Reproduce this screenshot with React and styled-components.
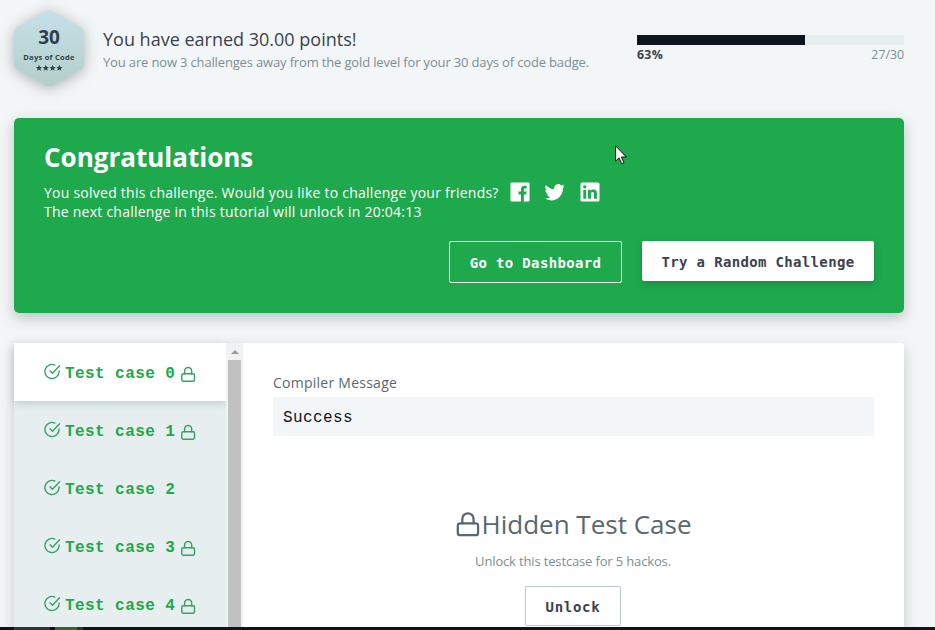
import React from "react";
import styled, { createGlobalStyle } from "styled-components";

const GlobalStyle = createGlobalStyle`
  * { box-sizing: border-box; }
  html, body { margin: 0; padding: 0; overflow: hidden; }
  body { background: #f3f6f7; font-family: "Open Sans", sans-serif; }
  p, h1, h2, h3 { margin: 0; font-weight: 400; }
`;

const mono = `"DejaVu Sans Mono", monospace`;
const wideMono = `"Liberation Mono", monospace`;

const Screen = styled.div`
  width: 935px;
  height: 630px;
  overflow: hidden;
  display: flex;
  flex-direction: column;
  background: #f3f6f7;
`;

const Content = styled.main`
  flex: 1;
  min-height: 0;
  overflow: hidden;
  padding: 0 31px 0 14px;
`;

const Header = styled.header`
  display: flex;
  height: 118px;
`;

const Badge = styled.svg`
  flex: none;
  width: 90px;
  height: 110px;
  margin-left: -10px;
  overflow: visible;

  path:first-of-type { filter: drop-shadow(0 2px 7px rgba(60, 65, 70, 0.38)); }
`;

const Points = styled.div`
  flex: 1;
  padding: 26px 0 0 9px;
  white-space: nowrap;
`;

const PointsTitle = styled.h2`
  font-size: 18px;
  line-height: 26px;
  color: #39424e;
`;

const PointsText = styled.p`
  font-size: 13px;
  line-height: 20px;
  letter-spacing: -0.155px;
  color: #7b8f93;
`;

const Progress = styled.div`
  width: 267px;
  padding-top: 35px;
`;

const Track = styled.div`
  height: 10px;
  background: #e7eeef;
`;

const Fill = styled.div`
  width: 168px;
  height: 100%;
  background: #0e141e;
`;

const ProgressLabels = styled.div`
  display: flex;
  justify-content: space-between;
  font-size: 12.3px;
  line-height: 20px;
  color: #7b8f93;

  strong { color: #39424e; letter-spacing: 0.3px; }
`;

const Banner = styled.section`
  height: 195px;
  padding: 22px 30px 0;
  border-radius: 5px;
  background: #1ea94c;
  color: #fff;
  box-shadow: 0 5px 14px rgba(50, 58, 68, 0.28);
`;

const BannerTitle = styled.h1`
  font-size: 26px;
  line-height: 34px;
  font-weight: 700;
`;

const BannerText = styled.p`
  display: flex;
  align-items: center;
  height: ${(p) => p.$height}px;
  font-size: 14px;
  letter-spacing: 0.245px;
  white-space: nowrap;
`;

const Share = styled.span`
  display: flex;
  gap: 15px;
  margin-left: 11.4px;

  svg { display: block; width: 20px; height: 20px; margin-top: -1px; fill: #fff; }
`;

const Actions = styled.div`
  display: flex;
  justify-content: flex-end;
  gap: 20px;
  margin-top: 29px;
`;

const Button = styled.button`
  height: ${(p) => p.$height || 40}px;
  width: ${(p) => p.$width}px;
  padding: 2px 0 0;
  border: ${(p) => p.$border || "0"};
  border-radius: 2px;
  background: ${(p) => p.$background || "transparent"};
  color: ${(p) => p.$color || "#39424e"};
  box-shadow: ${(p) => p.$shadow || "none"};
  font: 700 14px ${mono};
  letter-spacing: ${(p) => p.$spacing || 0.34}px;
  white-space: nowrap;
`;

const Results = styled.section`
  display: flex;
  height: 300px;
  margin-top: 30px;
  background: #fff;
  border-radius: 3px 3px 0 0;
  box-shadow: 0 5px 14px rgba(50, 68, 68, 0.24);
`;

const CaseList = styled.nav`
  width: 212px;
  background: #e7eeef;
`;

const CaseItem = styled.div`
  display: flex;
  align-items: center;
  height: 58px;
  padding-left: 30px;
  color: #1ba94c;
  background: ${(p) => (p.$active ? "#fff" : "transparent")};
  box-shadow: ${(p) => (p.$active ? "0 3px 8px rgba(60, 90, 90, 0.22)" : "none")};
  font: 700 16px ${wideMono};
  letter-spacing: 0.42px;
  white-space: pre;

  span { margin-top: 4px; }
  svg:first-child { margin: -1px 4px 0 0; }
  svg:last-child:not(:first-child) { margin: 4px 0 0 5px; }
`;

const Scrollbar = styled.div`
  width: 17px;
  padding: 0 2px;
  background: #f1f3f3;
`;

const ScrollArrow = styled.div`
  display: flex;
  justify-content: center;
  height: 17px;

  &::before {
    content: "";
    width: 0;
    height: 0;
    margin-top: 7px;
    border: 4px solid transparent;
    border-top: 0;
    border-bottom-color: #999;
    align-self: flex-start;
  }
`;

const ScrollThumb = styled.div`
  height: 283px;
  background: #c1c1c1;
`;

const Detail = styled.div`
  flex: 1;
  padding: 30px 30px 0;
`;

const Label = styled.p`
  font-size: 14px;
  line-height: 20px;
  letter-spacing: 0.25px;
  color: #576871;
`;

const Message = styled.div`
  height: 39px;
  margin-top: 4px;
  padding-left: 10px;
  background: #f3f6f7;
  color: #0e141e;
  font: 16px/42px ${wideMono};
  letter-spacing: 0.4px;
`;

const Hidden = styled.div`
  display: flex;
  flex-direction: column;
  align-items: center;
  margin-left: -1px;
  padding-top: 69px;
`;

const HiddenTitle = styled.h2`
  display: flex;
  align-items: center;
  font-size: 26px;
  line-height: 38px;
  color: #576871;
`;

const HiddenText = styled.p`
  margin: 8px 0 15px;
  font-size: 13px;
  line-height: 20px;
  letter-spacing: -0.15px;
  color: #7b8f93;
`;

const Footer = styled.footer`
  display: flex;
  flex: none;
  height: 3px;
  padding-left: 14px;
  background: #101415;
`;

const Task = styled.span`
  width: ${(p) => p.$width}px;
  margin-right: ${(p) => p.$gap}px;
  background: ${(p) => p.$color};
`;

const Pointer = styled.svg`
  position: absolute;
  left: 615px;
  top: 145px;
  width: 13px;
  height: 20px;
`;

const CheckIcon = () => (
  <svg width="17" height="17" viewBox="0 0 24 24" fill="none" stroke="#35a164" strokeWidth="1.9" strokeLinecap="round" strokeLinejoin="round">
    <path d="M21.300 11.100V12a10 10 0 1 1-5.900-9.100" />
    <path d="M22 4 12 14.500l-3.500-3.500" />
  </svg>
);

const LockIcon = ({ size = 17, color = "#35a164" }) => (
  <svg width={size} height={size} viewBox="0 0 24 24" fill="none" stroke={color} strokeWidth="2" strokeLinecap="round" strokeLinejoin="round">
    <rect x="2.500" y="11" width="18" height="10.500" rx="2" />
    <path d="M6.500 11V7a5 5 0 0 1 10 0v4" />
  </svg>
);

const star = "M0-3.2 .9-1 3.1-.9 1.4.6 2 2.8 0 1.6-2 2.8-1.4.6-3.1-.9-.9-1Z";

const DaysBadge = () => (
  <Badge viewBox="0 0 90 110">
    <defs>
      <linearGradient id="badge" x1="0" y1="0" x2="0" y2="1">
        <stop offset="0" stopColor="#c6e0e9" />
        <stop offset="1" stopColor="#b3cfc9" />
      </linearGradient>
    </defs>
    <path d="M41 11.500q4-2 8 0l26.500 15q4.500 2.500 4.500 7v30q0 4.500-4.500 7L49 85.500q-4 2-8 0L14.500 70.500q-4.500-2.500-4.500-7v-30q0-4.500 4.500-7Z" fill="url(#badge)" />
    <text x="45" y="44" textAnchor="middle" fontSize="19" fontWeight="700" fill="#323f4b">30</text>
    <text x="45" y="60" textAnchor="middle" fontSize="7.500" fontWeight="700" letterSpacing="0.28" fill="#323f4b">Days of Code</text>
    {[35, 41.8, 48.6, 55.4].map((x) => (
      <path key={x} d={star} fill="#323f4b" transform={`translate(${x} 68)`} />
    ))}
  </Badge>
);

const cases = [true, true, false, true, true];

export default function App() {
  return (
    <Screen>
      <GlobalStyle />
      <Content>
        <Header>
          <DaysBadge />
          <Points>
            <PointsTitle>You have earned 30.00 points!</PointsTitle>
            <PointsText>You are now 3 challenges away from the gold level for your 30 days of code badge.</PointsText>
          </Points>
          <Progress>
            <Track><Fill /></Track>
            <ProgressLabels><strong>63%</strong><span>27/30</span></ProgressLabels>
          </Progress>
        </Header>

        <Banner>
          <BannerTitle>Congratulations</BannerTitle>
          <BannerText $height={37}>
            You solved this challenge. Would you like to challenge your friends?
            <Share>
              <svg viewBox="0 0 20 20"><path d="M1.500 .5h17a1 1 0 0 1 1 1v17a1 1 0 0 1-1 1h-4.700v-7.100h2.400l.4-2.800h-2.800V7.900c0-.8.300-1.400 1.400-1.400h1.500V4c-.4-.1-1.200-.2-2.100-.2-2.200 0-3.600 1.300-3.600 3.700v2.100H8.500v2.800H11v7.100H1.500a1 1 0 0 1-1-1v-17a1 1 0 0 1 1-1Z" /></svg>
              <svg viewBox="0 0 24 24"><path d="M23.400 4.900a9.700 9.700 0 0 1-2.800.8 4.900 4.900 0 0 0 2.100-2.700 9.800 9.800 0 0 1-3.100 1.200 4.900 4.900 0 0 0-8.400 4.500A13.900 13.900 0 0 1 1.100 3.500a4.900 4.900 0 0 0 1.500 6.600 4.900 4.900 0 0 1-2.200-.6v.1a4.900 4.900 0 0 0 3.900 4.800 4.900 4.900 0 0 1-2.200.1 4.900 4.900 0 0 0 4.600 3.400A9.900 9.900 0 0 1 0 19.900a13.900 13.900 0 0 0 7.500 2.200c9.100 0 14-7.500 14-14v-.6a10 10 0 0 0 1.900-2.600Z" /></svg>
              <svg viewBox="0 0 20 20"><path fillRule="evenodd" d="M2 .5h16a1.500 1.500 0 0 1 1.500 1.500v16a1.500 1.500 0 0 1-1.500 1.500H2A1.500 1.500 0 0 1 .5 18V2A1.500 1.500 0 0 1 2 .5ZM3.300 7.700v9h2.900v-9ZM4.750 3.200a1.650 1.650 0 1 0 0 3.300 1.650 1.650 0 0 0 0-3.300ZM8 7.700v9h2.900v-4.500c0-1.200.3-2.300 1.700-2.300s1.400 1.300 1.400 2.400v4.400h2.900v-5c0-2.400-.5-4.200-3.400-4.200-1.400 0-2.300.7-2.700 1.400V7.700Z" /></svg>
            </Share>
          </BannerText>
          <BannerText $height={1}>The next challenge in this tutorial will unlock in 20:04:13</BannerText>
          <Actions>
            <Button $width={173} $height={42} $border="1px solid #fff" $color="#fff">Go to Dashboard</Button>
            <Button $width={232} $background="#fff" $shadow="0 3px 7px rgba(20, 70, 40, 0.3)">Try a Random Challenge</Button>
          </Actions>
        </Banner>

        <Results>
          <CaseList>
            {cases.map((locked, i) => (
              <CaseItem key={i} $active={i === 0}>
                <CheckIcon />
                <span>{`Test case ${i}`}</span>
                {locked && <LockIcon />}
              </CaseItem>
            ))}
          </CaseList>
          <Scrollbar>
            <ScrollArrow />
            <ScrollThumb />
          </Scrollbar>
          <Detail>
            <Label>Compiler Message</Label>
            <Message>Success</Message>
            <Hidden>
              <HiddenTitle><LockIcon size={27} color="#576871" />Hidden Test Case</HiddenTitle>
              <HiddenText>Unlock this testcase for 5 hackos.</HiddenText>
              <Button $width={96} $border="1px solid #b7c9cc" $background="#fff" $spacing={0.7}>Unlock</Button>
            </Hidden>
          </Detail>
        </Results>
      </Content>
      <Footer>
        <Task $width={36} $gap={5} $color="#303435" />
        <Task $width={22} $gap={0} $color="#38652f" />
        <Task $width={6} $gap={0} $color="#303435" />
      </Footer>
      <Pointer viewBox="0 0 13 20">
        <path d="M.6 .8v15.400l3.500-3.300 2.600 5.800 2.300-1-2.600-5.700h4.900Z" fill="#fff" stroke="#111" strokeWidth="1" />
      </Pointer>
    </Screen>
  );
}
